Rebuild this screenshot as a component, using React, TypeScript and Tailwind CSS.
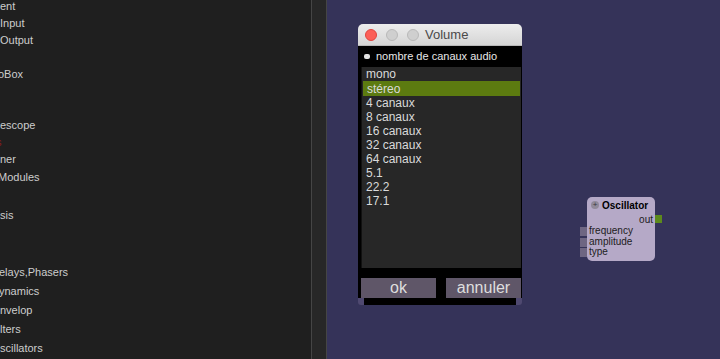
import React from "react";

const font = { fontFamily: '"Liberation Sans", Arial, sans-serif' };

// visible part of the (clipped) library tree on the left
const tree = [
  { t: "ent", x: 0 },
  { t: "Input", x: 0 },
  { t: "Output", x: 0 },
  { t: "", x: 0 },
  { t: "oBox", x: -2 },
  { t: "", x: 0 },
  { t: "", x: 0 },
  { t: "escope", x: 0 },
  { t: "s", x: -4, red: true },
  { t: "ner", x: 0 },
  { t: "Modules", x: -2 },
  { t: "", x: 0 },
  { t: "sis", x: 0 },
  { t: "", x: 0 },
  { t: "", x: 0 },
  { t: "elays,Phasers", x: -1 },
  { t: "ynamics", x: -1 },
  { t: "nvelop", x: 0 },
  { t: "lters", x: 0 },
  { t: "scillators", x: 0 },
];

const channels = [
  "mono",
  "stéreo",
  "4 canaux",
  "8 canaux",
  "16 canaux",
  "32 canaux",
  "64 canaux",
  "5.1",
  "22.2",
  "17.1",
];

function Sidebar() {
  return (
    <div className="w-[311px] h-full bg-[#1f1f1f] overflow-hidden text-[11px] text-[#cdcdcd]" style={font}>
      <div className="mt-[-2px]">
        {tree.map((row, i) => (
          <div
            key={i}
            className={`flex items-center whitespace-nowrap ${i < 10 ? "h-[17px]" : "h-[19px]"} ${
              row.red ? "text-[#8a1c1c]" : ""
            }`}
          >
            <span style={{ marginLeft: row.x }}>{row.t}</span>
          </div>
        ))}
      </div>
    </div>
  );
}

function VolumeDialog() {
  return (
    <div className="absolute left-[31px] top-[24px] w-[164px]" style={font}>
      {/* title bar */}
      <div className="h-[22px] rounded-t-[5px] bg-gradient-to-b from-[#ededed] to-[#d5d5d5] flex items-center pl-[7px] border-b border-[#b8b8b8]">
        <div className="w-[12px] h-[12px] rounded-full bg-[#fc5f57] border border-[#e0443e]" />
        <div className="w-[12px] h-[12px] rounded-full bg-[#cfcfcf] border border-[#b9b9b9] ml-[9px]" />
        <div className="w-[12px] h-[12px] rounded-full bg-[#cfcfcf] border border-[#b9b9b9] ml-[9px]" />
        <span className="ml-[6px] text-[13px] text-[#4a4a4a]">Volume</span>
      </div>

      <div className="bg-black pl-[3px] pr-[1px]">
        <div className="h-[21px] flex items-center">
          <div className="w-[6px] h-[5px] rounded-[2px] bg-[#e2e2e2] ml-[3px]" />
          <span className="ml-[6px] text-[11px] text-[#e8e8e8]">nombre de canaux audio</span>
        </div>

        <div className="h-[201px] bg-[#272727] border-l border-[#111] text-[12px] text-[#dadada]">
          {channels.map((c, i) => (
            <div
              key={c}
              className={`flex items-center pl-[4px] ${
                i === 1 ? "h-[15px] bg-[#5c7b10] mx-[1px] pl-[3px]" : "h-[14px]"
              }`}
            >
              {c}
            </div>
          ))}
        </div>

        <div className="flex gap-[10px] pt-[10px] text-[16px] text-[#dedede]">
          <div className="w-[75px] h-[20px] bg-[#5f5668] flex items-center justify-center">ok</div>
          <div className="w-[75px] h-[20px] bg-[#5f5668] flex items-center justify-center">annuler</div>
        </div>
      </div>

      <div className="h-[7px] bg-[#4f4970] rounded-b-[3px]">
        <div className="h-full mx-[6px] bg-black" />
      </div>
    </div>
  );
}

function OscillatorNode() {
  return (
    <div
      className="absolute left-[260px] top-[197px] w-[68px] h-[64px] rounded-[5px] bg-[#b5a9c7] text-[10px] text-[#1c1c1c]"
      style={font}
    >
      <div className="flex items-center h-[15px] pl-[4px] pt-[1px]">
        <div className="w-[8px] h-[8px] rounded-full bg-[#918a9a] flex items-center justify-center text-[8px] leading-none text-[#3a3640]">
          +
        </div>
        <span className="ml-[3px] font-bold text-black">Oscillator</span>
      </div>
      <div className="relative h-[14px] flex items-center justify-end pr-[2px]">
        out
        <div className="absolute right-[-7px] top-[3px] w-[7px] h-[8px] bg-[#5d8a1c]" />
      </div>
      {["frequency", "amplitude", "type"].map((p) => (
        <div key={p} className="relative h-[10.5px] flex items-center pl-[2px] leading-none">
          <div className="absolute left-[-7px] top-[1px] w-[7px] h-[9px] bg-[#6e6682]" />
          {p}
        </div>
      ))}
    </div>
  );
}

export default function App() {
  return (
    <div className="w-[720px] h-[359px] flex overflow-hidden bg-[#353359]">
      <Sidebar />
      <div className="w-[16px] h-full bg-[#272727] border-l border-r border-[#454545]" />
      <div className="relative flex-1 h-full bg-[#353359]">
        <VolumeDialog />
        <OscillatorNode />
      </div>
    </div>
  );
}
